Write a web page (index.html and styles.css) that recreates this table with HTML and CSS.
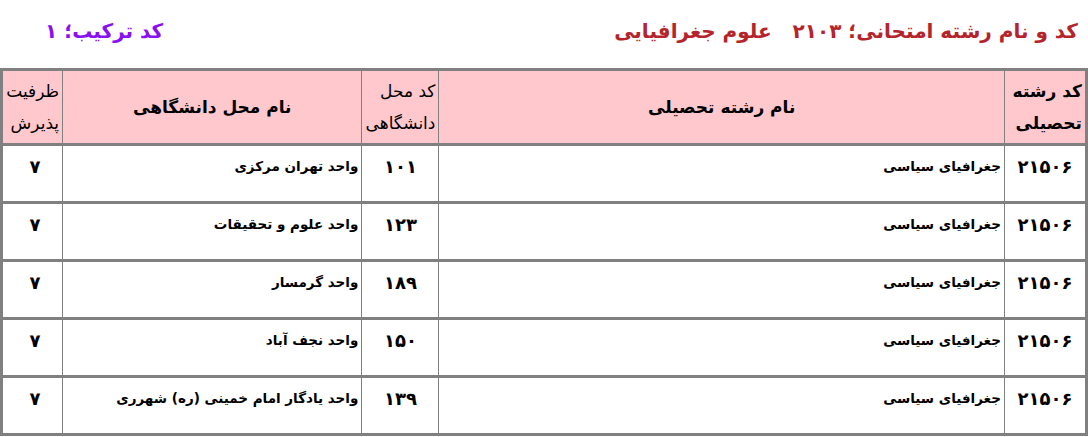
FILE: index.html
```html
<!DOCTYPE html>
<html lang="fa" dir="rtl">
<head>
<meta charset="utf-8">
<link rel="stylesheet" href="styles.css">
</head>
<body>
<div class="titles">
  <div class="title-main">کد و نام رشته امتحانی؛ ۲۱۰۳&nbsp;&nbsp; علوم جغرافیایی</div>
  <div class="title-combo">کد ترکیب؛ ۱</div>
</div>
<table class="grid">
  <colgroup>
    <col class="c-code">
    <col class="c-name">
    <col class="c-ucode">
    <col class="c-uname">
    <col class="c-cap">
  </colgroup>
  <thead>
    <tr>
      <th class="h-right bold">کد رشته<br>تحصیلی</th>
      <th class="h-center bold">نام رشته تحصیلی</th>
      <th class="h-right">کد محل<br>دانشگاهی</th>
      <th class="h-center bold">نام محل دانشگاهی</th>
      <th class="h-right">ظرفیت<br>پذیرش</th>
    </tr>
  </thead>
  <tbody>
    <tr><td class="num">۲۱۵۰۶</td><td class="txt">جغرافیای سیاسی</td><td class="num">۱۰۱</td><td class="txt">واحد تهران مرکزی</td><td class="num">۷</td></tr>
    <tr><td class="num">۲۱۵۰۶</td><td class="txt">جغرافیای سیاسی</td><td class="num">۱۲۳</td><td class="txt">واحد علوم و تحقیقات</td><td class="num">۷</td></tr>
    <tr><td class="num">۲۱۵۰۶</td><td class="txt">جغرافیای سیاسی</td><td class="num">۱۸۹</td><td class="txt">واحد گرمسار</td><td class="num">۷</td></tr>
    <tr><td class="num">۲۱۵۰۶</td><td class="txt">جغرافیای سیاسی</td><td class="num">۱۵۰</td><td class="txt">واحد نجف آباد</td><td class="num">۷</td></tr>
    <tr><td class="num">۲۱۵۰۶</td><td class="txt">جغرافیای سیاسی</td><td class="num">۱۳۹</td><td class="txt">واحد یادگار امام خمینی (ره) شهرری</td><td class="num">۷</td></tr>
  </tbody>
</table>
</body>
</html>
```
FILE: styles.css
```css
html, body {
  margin: 0;
  padding: 0;
  background: #ffffff;
}
body {
  font-family: "DejaVu Sans", "Noto Sans", sans-serif;
  color: #000;
  width: 1088px;
}
.titles {
  display: flex;
  justify-content: space-between;
  align-items: center;
  height: 68px;
  padding: 0 10px 6px 0;
  box-sizing: border-box;
}
.title-main {
  color: #b5242b;
  font-weight: bold;
  font-size: 20px;
  white-space: nowrap;
}
.title-combo {
  color: #8a10f0;
  font-weight: bold;
  font-size: 20px;
  white-space: nowrap;
  margin-left: 45px;
}
.grid {
  border-collapse: collapse;
  table-layout: fixed;
  width: 1088px;
  border: 3px solid #808080;
}
.c-code { width: 82px; }
.c-name { width: 565px; }
.c-ucode { width: 77px; }
.c-uname { width: 299px; }
.c-cap { width: 61px; }
th, td {
  border-left: 1px solid #808080;
  border-right: 1px solid #808080;
  border-top: 3px solid #808080;
  border-bottom: 3px solid #808080;
  padding: 0 3px;
}
th {
  background: #ffc8cc;
  height: 72px;
  font-size: 17px;
  font-weight: normal;
  vertical-align: middle;
  line-height: 32px;
}
th.bold { font-weight: bold; }
th.h-right { text-align: right; }
th.h-center { text-align: center; }
td {
  height: 58px;
  vertical-align: top;
  padding-top: 12px;
  box-sizing: border-box;
}
td.txt {
  text-align: right;
  font-weight: bold;
  font-size: 13.5px;
}
td.num {
  text-align: center;
  font-weight: bold;
  font-size: 18px;
  padding-top: 10px;
}
td.num:last-child {
  padding-left: 8px;
}
```
